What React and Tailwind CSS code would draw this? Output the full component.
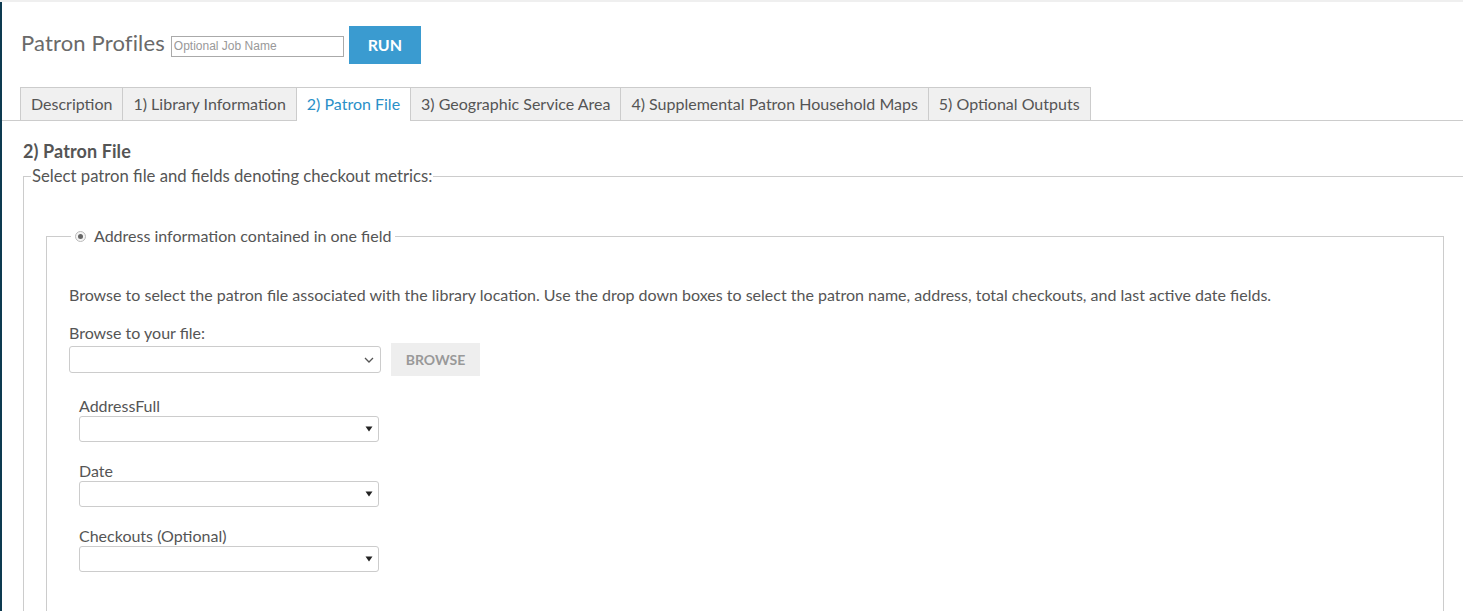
import React from "react";

const tabs = [
    "Description",
    "1) Library Information",
    "2) Patron File",
    "3) Geographic Service Area",
    "4) Supplemental Patron Household Maps",
    "5) Optional Outputs",
];

const FieldSelect = ({ label }) => (
    <div className="mb-[19px]">
        <div className="text-[16px] leading-[20px] text-[#555]">{label}</div>
        <div className="w-[300px] h-[26px] border border-[#ccc] rounded-[3px] bg-white flex items-center justify-end pr-[5px]">
            <svg width="8" height="6" viewBox="0 0 8 6">
                <path d="M0.5 0.5 L7.5 0.5 L4 5.5 Z" fill="#222" />
            </svg>
        </div>
    </div>
);

const App = () => {
    return (
        <div className="w-[1463px] h-[611px] overflow-hidden bg-white font-['Lato','Noto_Sans',sans-serif]">
            <div className="h-[2px] bg-[#efefef]" />
            <div className="h-[609px] border-l-2 border-[#0d3a50] overflow-hidden">
                {/* header */}
                <div className="flex items-center pl-[19px] pt-[24px]">
                    <h1 className="text-[22px] leading-[40px] text-[#6a6a6a] tracking-[0.15px] -mt-[4px]">Patron Profiles</h1>
                    <input
                        className="ml-[6px] mt-[2px] w-[173px] h-[21px] border border-[#aaa] px-[2px] text-[12px] font-['Liberation_Sans',Arial,sans-serif] placeholder:text-[#999] outline-none"
                        placeholder="Optional Job Name"
                    />
                    <button className="ml-[5px] w-[72px] h-[38px] bg-[#3a9bd0] text-white font-bold text-[16px]">
                        RUN
                    </button>
                </div>

                {/* tabs */}
                <div className="mt-[23px] flex border-b border-[#ccc] pl-[18px]">
                    {tabs.map((t, i) => {
                        const active = i === 2;
                        return (
                            <div
                                key={t}
                                className={
                                    active
                                        ? "h-[34px] -mb-[1px] px-[10px] pb-[1px] flex items-center text-[16px] text-[#2a90c8] bg-white border-t border-r border-[#ccc]"
                                        : i === 0
                                        ? "h-[33px] px-[10px] pb-[1px] flex items-center text-[16px] text-[#555] bg-[#f0f0f0] border-t border-l border-r border-[#ccc]"
                                        : "h-[33px] px-[10px] pb-[1px] flex items-center text-[16px] text-[#555] bg-[#f0f0f0] border-t border-r border-[#ccc]"
                                }
                            >
                                {t}
                            </div>
                        );
                    })}
                </div>

                {/* content */}
                <div className="pl-[21px] pt-[19px]">
                    <h2 className="text-[18px] font-bold leading-[22px] text-[#555] tracking-[0.1px]">2) Patron File</h2>
                    <fieldset className="mt-[4px] w-[1460px] border-l border-t border-[#ccc] pl-[22px] pb-[40px]">
                        <legend className="ml-[-15px] px-[1px] text-[16.7px] leading-[20px] text-[#555]">
                            Select patron file and fields denoting checkout metrics:
                        </legend>
                        <fieldset className="mt-[40px] mr-[39px] border-l border-t border-r border-[#ccc] pl-[22px] pb-[40px]">
                            <legend className="ml-[2px] px-[4px] flex items-center text-[16px] leading-[20px] text-[#555]">
                                <span className="w-[11px] h-[11px] rounded-full border border-[#bbb] bg-[#f5f5f5] flex items-center justify-center mr-[8px]">
                                    <span className="w-[5px] h-[5px] rounded-full bg-[#666]" />
                                </span>
                                Address information contained in one field
                            </legend>
                            <p className="mt-[39px] text-[16px] leading-[20px] text-[#555]">
                                Browse to select the patron file associated with the library location. Use the drop down boxes to select the patron name, address, total checkouts, and last active date fields.
                            </p>
                            <div className="mt-[18px] text-[16px] leading-[20px] text-[#555]">Browse to your file:</div>
                            <div className="flex items-center">
                                <div className="w-[312px] h-[27px] border border-[#ccc] rounded-[3px] flex items-center justify-end pr-[6px]">
                                    <svg width="10" height="6" viewBox="0 0 10 6">
                                        <path d="M1 1 L5 5 L9 1" fill="none" stroke="#555" strokeWidth="1.3" />
                                    </svg>
                                </div>
                                <button className="ml-[10px] w-[89px] h-[33px] bg-[#eeeeee] text-[#999] font-bold text-[14px]">
                                    BROWSE
                                </button>
                            </div>
                            <div className="pl-[10px] mt-[20px]">
                                <FieldSelect label="AddressFull" />
                                <FieldSelect label="Date" />
                                <FieldSelect label="Checkouts (Optional)" />
                            </div>
                        </fieldset>
                    </fieldset>
                </div>
            </div>
        </div>
    );
};

export default App;
